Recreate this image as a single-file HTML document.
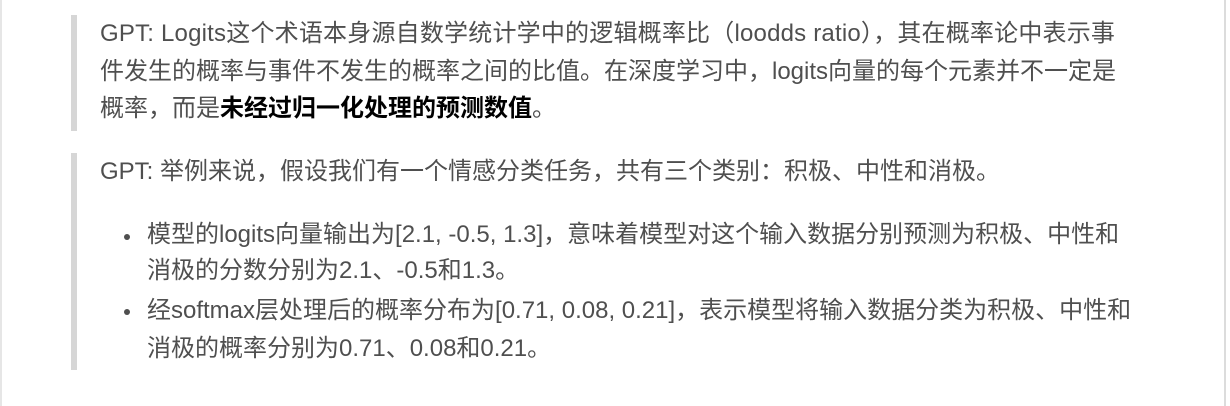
<!DOCTYPE html>
<html><head><meta charset="utf-8"><style>
html,body{margin:0;padding:0;background:#fff;width:1230px;height:406px;overflow:hidden;position:relative}
.edgeL{position:absolute;left:0;top:0;width:2px;height:406px;background:#e6e6e6}
.edgeR{position:absolute;left:1224px;top:0;width:2px;height:406px;background:#dcdcdc}
.bar{position:absolute;left:71px;width:6px;background:#d6d6d6}
.l{position:absolute;white-space:nowrap;font-family:"Liberation Sans","Noto Sans CJK SC",sans-serif;font-size:24px;color:#4f4f4f;line-height:26px}
b{color:#000;font-weight:bold}
.dot{position:absolute;left:124px;width:6px;height:6px;border-radius:50%;background:#4f4f4f}
</style></head><body>
<div class="edgeL"></div><div class="edgeR"></div>
<div class="bar" style="top:15px;height:116px"></div>
<div class="bar" style="top:153px;height:217px"></div>
<div class="l" style="left:100px;top:21px;letter-spacing:0.2px">GPT: Logits这个术语本身源自数学统计学中的逻辑概率比（loodds ratio），其在概率论中表示事</div>
<div class="l" style="left:100px;top:59px">件发生的概率与事件不发生的概率之间的比值。在深度学习中，logits向量的每个元素并不一定是</div>
<div class="l" style="left:100px;top:96px">概率，而是<b>未经过归一化处理的预测数值</b>。</div>
<div class="l" style="left:100px;top:159px">GPT: 举例来说，假设我们有一个情感分类任务，共有三个类别：积极、中性和消极。</div>
<div class="dot" style="top:234px"></div>
<div class="l" style="left:147px;top:222px">模型的logits向量输出为[2.1, -0.5, 1.3]，意味着模型对这个输入数据分别预测为积极、中性和</div>
<div class="l" style="left:147px;top:258px">消极的分数分别为2.1、-0.5和1.3。</div>
<div class="dot" style="top:309px"></div>
<div class="l" style="left:147px;top:298px">经softmax层处理后的概率分布为[0.71, 0.08, 0.21]，表示模型将输入数据分类为积极、中性和</div>
<div class="l" style="left:147px;top:336px">消极的概率分别为0.71、0.08和0.21。</div>
</body></html>
